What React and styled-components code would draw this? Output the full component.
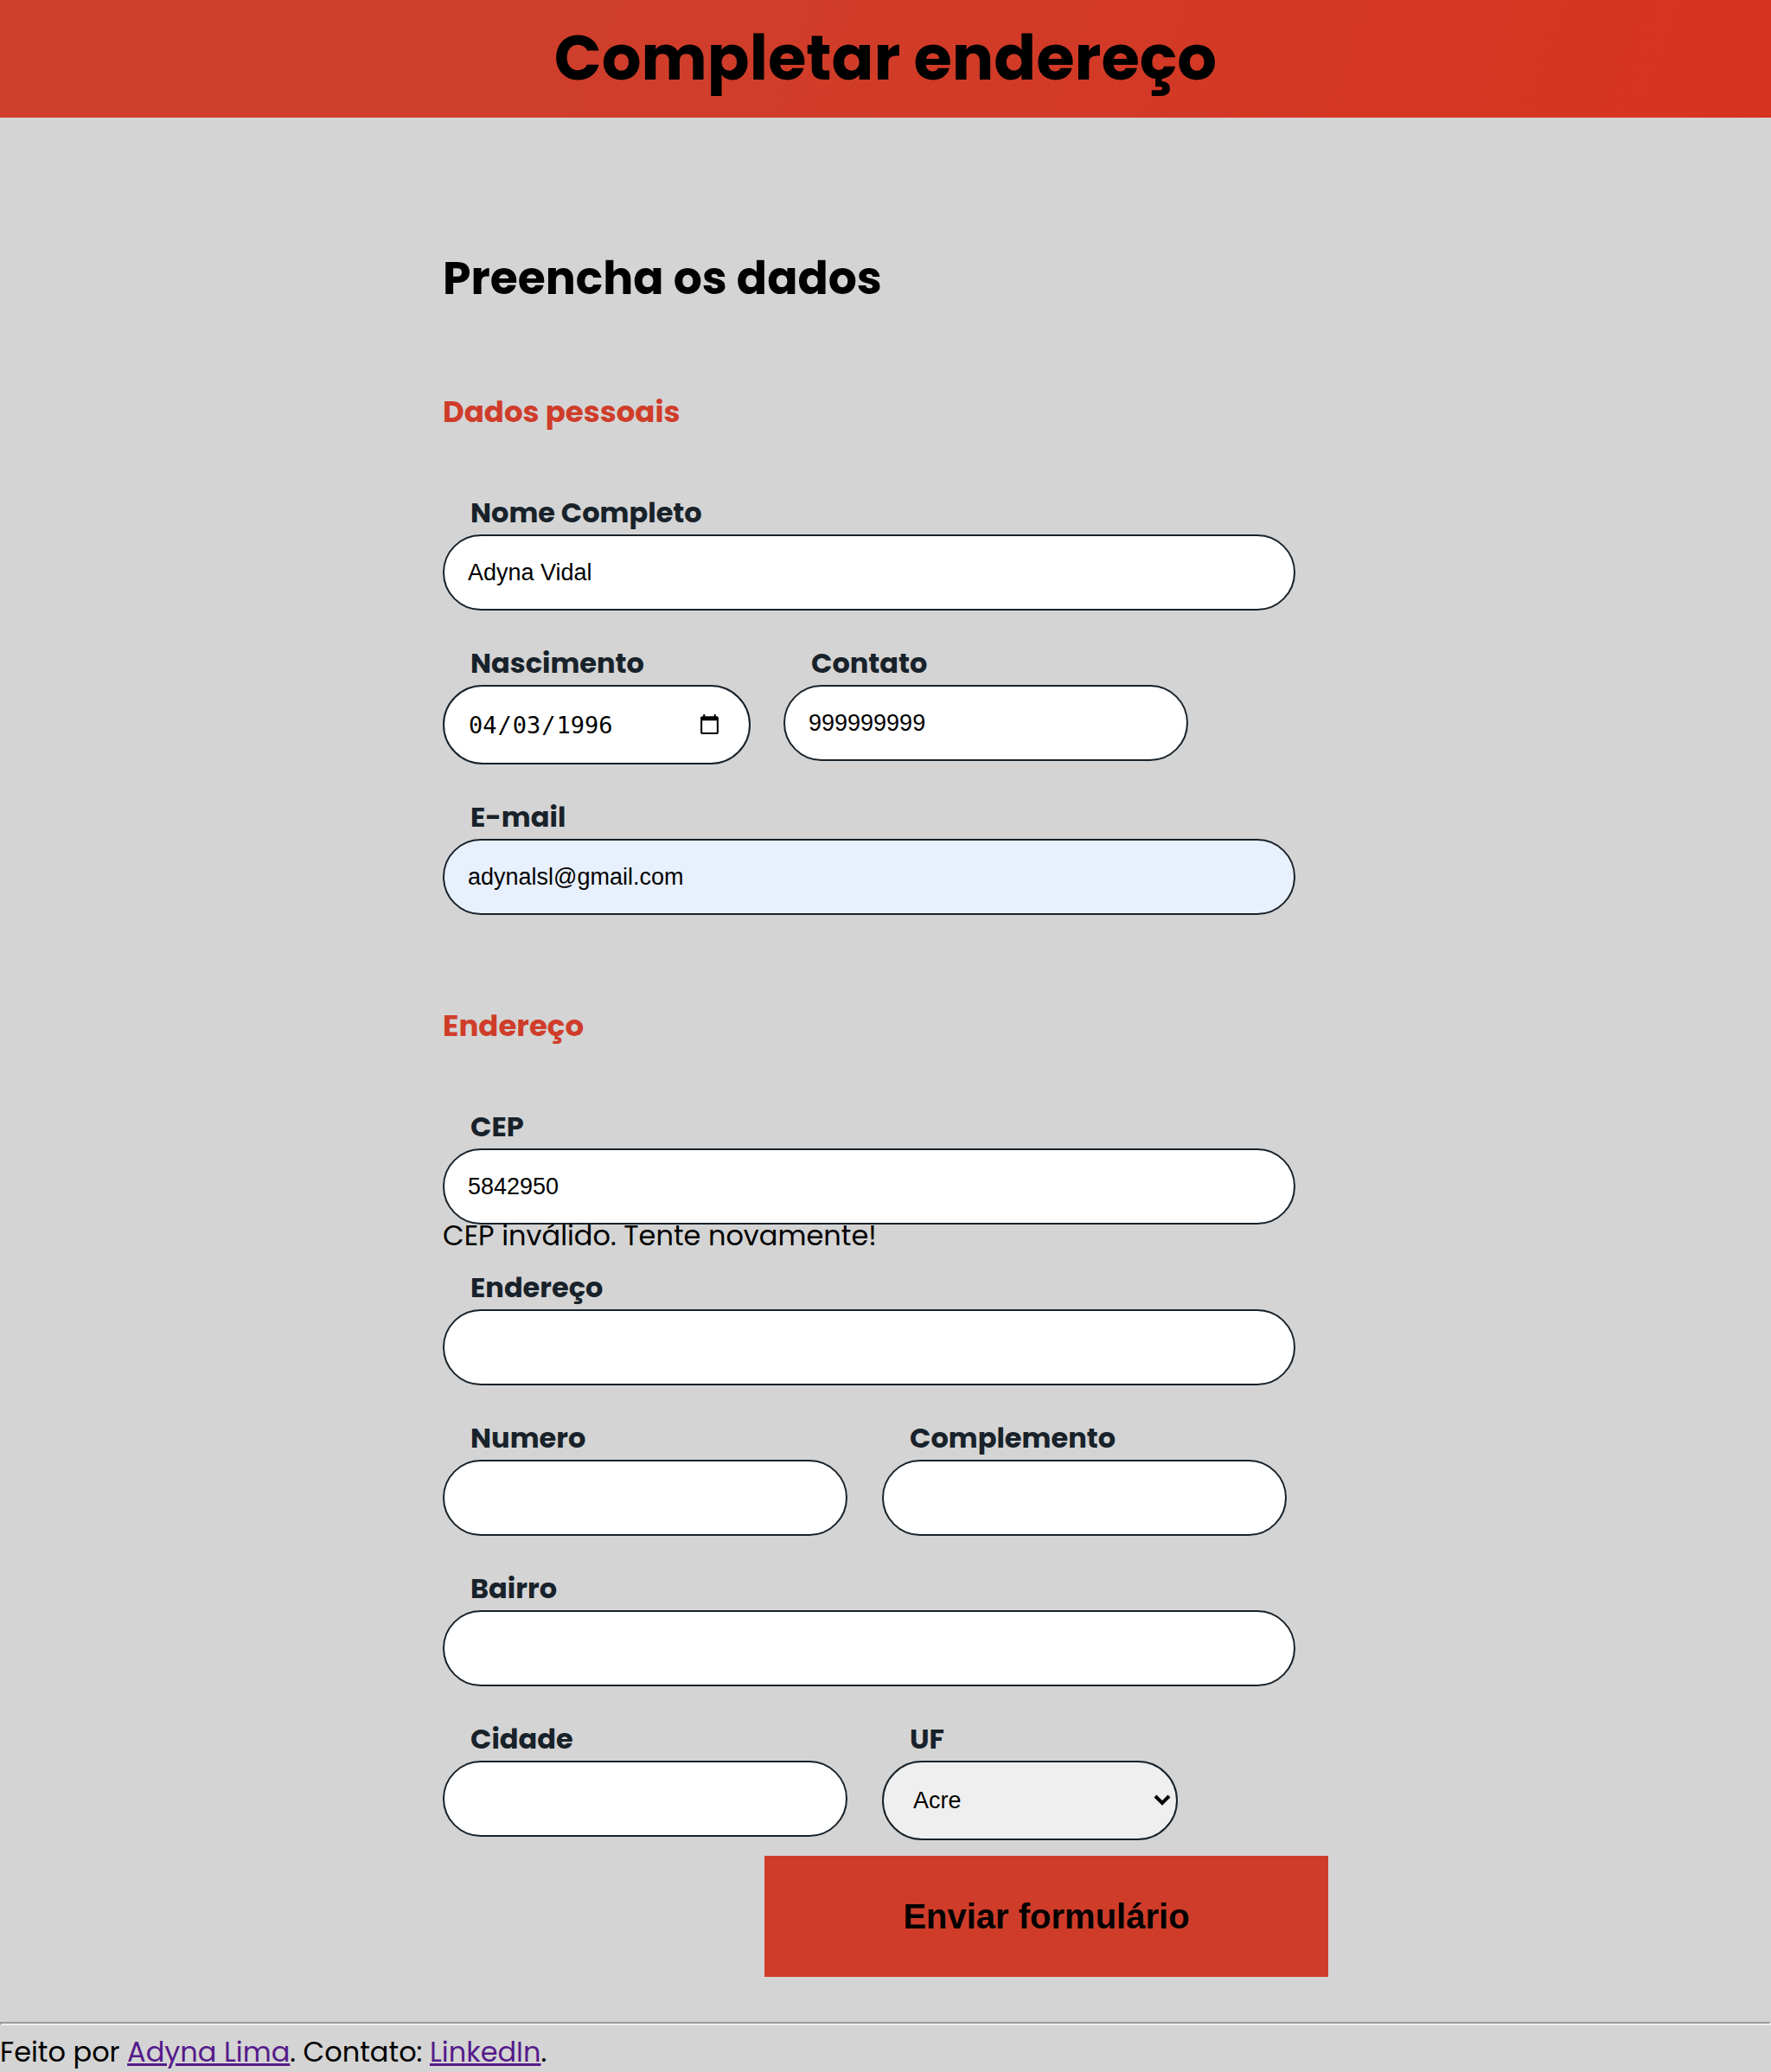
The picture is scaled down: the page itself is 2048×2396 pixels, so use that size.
import React from "react";
import styled, { createGlobalStyle } from "styled-components";

const GlobalStyle = createGlobalStyle`
  *, *::before, *::after { box-sizing: border-box; }
  body {
    margin: 0;
    background: #d4d4d4;
    color: #000;
    font-family: Poppins, Inter, "Liberation Sans", sans-serif;
    font-size: 32px;
  }
`;

const Header = styled.header`
  padding: 13px 0 15px;
  background: linear-gradient(110deg, #cf3f2c 30%, #d63420 100%);
  text-align: center;
`;

const Title = styled.h1`
  margin: 0;
  font-size: 72px;
  line-height: 108px;
  font-weight: 700;
`;

const Form = styled.form`
  width: 50%;
  margin: 0 auto;
  padding: 145px 0 52px;
`;

const FormTitle = styled.h2`
  margin: 0 0 89px;
  font-size: 52px;
  line-height: 82px;
  font-weight: 700;
`;

const Section = styled.fieldset`
  margin: 0;
  padding: 0;
  border: 0;
  min-width: 0;

  & + & { margin-top: 104px; }
`;

const SectionTitle = styled.h3`
  margin: 0 0 70px;
  color: #cf3d2a;
  font-size: 34px;
  line-height: 48px;
  font-weight: 700;
`;

const Fields = styled.div`
  display: flex;
  flex-direction: column;
  gap: 38px;
  padding-right: 38px;
`;

const Row = styled.div`
  display: flex;
  align-items: flex-start;
  gap: ${(p) => p.$gap || 40}px;
`;

const Field = styled.div`
  display: flex;
  flex-direction: column;
  width: ${(p) => p.$width || "100%"};
`;

const Label = styled.label`
  margin: 0 0 2px 32px;
  color: #18222a;
  font-size: 32px;
  line-height: 46px;
  font-weight: 700;
`;

const Input = styled.input`
  width: 100%;
  height: ${(p) => (p.type === "date" ? 92 : 88)}px;
  padding: 0 27px;
  border: 2px solid #18222a;
  border-radius: 46px;
  background: ${(p) => (p.$filled ? "#e8f0fe" : "#fff")};
  color: #000;
  font-family: ${(p) =>
    p.type === "date" ? '"DejaVu Sans Mono", monospace' : '"Liberation Sans", Arial, sans-serif'};
  font-size: 27px;

  &::-webkit-calendar-picker-indicator {
    width: 27px;
    height: 27px;
    padding: 0;
    margin-right: 5px;
  }
`;

const SelectBox = styled.div`
  position: relative;

  svg {
    position: absolute;
    right: 8px;
    top: 39px;
    pointer-events: none;
  }
`;

const Select = styled.select`
  appearance: none;
  display: block;
  width: 100%;
  height: 92px;
  padding: 0 34px;
  border: 2px solid #18222a;
  border-radius: 46px;
  background: #efefef;
  color: #000;
  font-family: "Liberation Sans", Arial, sans-serif;
  font-size: 27px;
`;

const Message = styled.p`
  margin: 0 0 -14px;
  line-height: 26px;
  white-space: nowrap;
`;

const Submit = styled.button`
  display: block;
  width: 652px;
  height: 140px;
  margin: 18px 0 0 auto;
  border: 0;
  background: #cf3d2a;
  color: #000;
  font-family: "Liberation Sans", Arial, sans-serif;
  font-size: 40px;
  font-weight: 700;
`;

const Divider = styled.hr`
  margin: 0;
  border: 2px solid;
  border-color: #9a9a9a #eee #eee #9a9a9a;
`;

const Footer = styled.footer`
  padding-top: 8px;
  line-height: 46px;

  a { color: #551a8b; }
`;

function TextField({ id, label, width, children, ...rest }) {
  return (
    <Field $width={width}>
      <Label htmlFor={id}>{label}</Label>
      <Input id={id} type="text" {...rest} />
      {children}
    </Field>
  );
}

export default function App() {
  return (
    <>
      <GlobalStyle />
      <Header>
        <Title>Completar endereço</Title>
      </Header>
      <Form onSubmit={(e) => e.preventDefault()}>
        <FormTitle>Preencha os dados</FormTitle>
        <Section>
          <SectionTitle>Dados pessoais</SectionTitle>
          <Fields>
            <TextField id="nome" label="Nome Completo" defaultValue="Adyna Vidal" />
            <Row $gap={38}>
              <TextField id="nascimento" label="Nascimento" width="356px" type="date" defaultValue="1996-04-03" />
              <TextField id="contato" label="Contato" width="468px" type="tel" defaultValue="999999999" />
            </Row>
            <TextField id="email" label="E-mail" type="email" defaultValue="adynalsl@gmail.com" $filled />
          </Fields>
        </Section>
        <Section>
          <SectionTitle>Endereço</SectionTitle>
          <Fields>
            <TextField id="cep" label="CEP" defaultValue="5842950">
              <Message>CEP inválido. Tente novamente!</Message>
            </TextField>
            <TextField id="endereco" label="Endereço" />
            <Row>
              <TextField id="numero" label="Numero" width="468px" />
              <TextField id="complemento" label="Complemento" width="468px" />
            </Row>
            <TextField id="bairro" label="Bairro" />
            <Row>
              <TextField id="cidade" label="Cidade" width="468px" />
              <Field $width="342px">
                <Label htmlFor="uf">UF</Label>
                <SelectBox>
                  <Select id="uf" defaultValue="AC">
                    <option value="AC">Acre</option>
                    <option value="AL">Alagoas</option>
                    <option value="AM">Amazonas</option>
                    <option value="BA">Bahia</option>
                  </Select>
                  <svg width="20" height="14" viewBox="0 0 20 14" aria-hidden="true">
                    <path d="M2 2 L10 10 L18 2" fill="none" stroke="#000" strokeWidth="4" />
                  </svg>
                </SelectBox>
              </Field>
            </Row>
          </Fields>
        </Section>
        <Submit type="submit">Enviar formulário</Submit>
      </Form>
      <Divider />
      <Footer>
        Feito por <a href="#adyna">Adyna Lima</a>. Contato: <a href="#linkedin">LinkedIn</a>.
      </Footer>
    </>
  );
}
